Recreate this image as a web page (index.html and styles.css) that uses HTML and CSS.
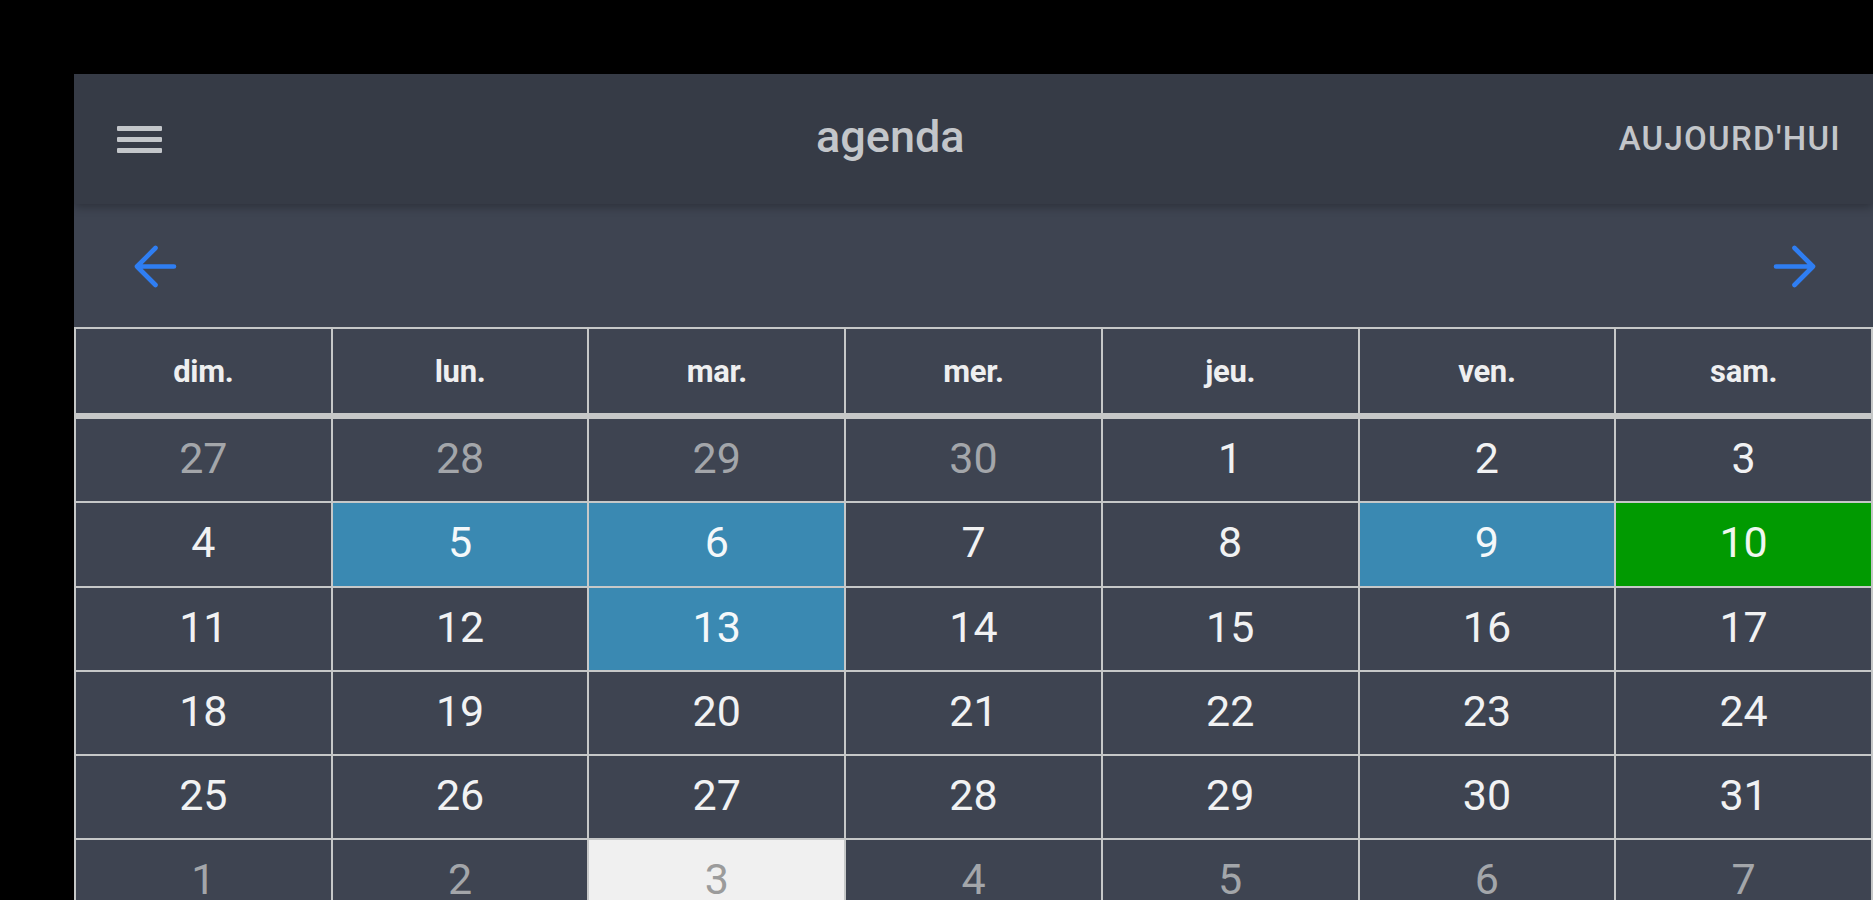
FILE: index.html
```html
<!DOCTYPE html>
<html lang="fr">
<head>
<meta charset="utf-8">
<title>agenda</title>
<link rel="stylesheet" href="styles.css">
</head>
<body>
<div class="panel">
  <header class="topbar">
    <button class="menu-btn" aria-label="menu">
      <svg width="45" height="27" viewBox="0 0 45 27"><rect x="0" y="0" width="45" height="5" rx="1"/><rect x="0" y="11" width="45" height="5" rx="1"/><rect x="0" y="22" width="45" height="5" rx="1"/></svg>
    </button>
    <div class="title">agenda</div>
    <button class="today-btn">AUJOURD'HUI</button>
  </header>
  <nav class="navbar">
    <button class="arrow-btn" aria-label="précédent">
      <svg width="37" height="37" viewBox="5 5 14 14"><path d="M19 12H5M12 19l-7-7 7-7"/></svg>
    </button>
    <button class="arrow-btn" aria-label="suivant">
      <svg width="37" height="37" viewBox="5 5 14 14"><path d="M5 12h14M12 5l7 7-7 7"/></svg>
    </button>
  </nav>
  <div class="calendar">
    <div class="dow">dim.</div><div class="dow">lun.</div><div class="dow">mar.</div><div class="dow">mer.</div><div class="dow">jeu.</div><div class="dow">ven.</div><div class="dow">sam.</div>

    <div class="day muted">27</div><div class="day muted">28</div><div class="day muted">29</div><div class="day muted">30</div><div class="day">1</div><div class="day">2</div><div class="day">3</div>

    <div class="day">4</div><div class="day event">5</div><div class="day event">6</div><div class="day">7</div><div class="day">8</div><div class="day event">9</div><div class="day today">10</div>

    <div class="day">11</div><div class="day">12</div><div class="day event">13</div><div class="day">14</div><div class="day">15</div><div class="day">16</div><div class="day">17</div>

    <div class="day">18</div><div class="day">19</div><div class="day">20</div><div class="day">21</div><div class="day">22</div><div class="day">23</div><div class="day">24</div>

    <div class="day">25</div><div class="day">26</div><div class="day">27</div><div class="day">28</div><div class="day">29</div><div class="day">30</div><div class="day">31</div>

    <div class="day muted">1</div><div class="day muted">2</div><div class="day muted selected">3</div><div class="day muted">4</div><div class="day muted">5</div><div class="day muted">6</div><div class="day muted">7</div>
  </div>
</div>
</body>
</html>
```
FILE: styles.css
```css
html, body {
  margin: 0;
  padding: 0;
  background: #000;
  height: 900px;
  overflow: hidden;
}

body {
  font-family: Roboto, "Liberation Sans", Arial, sans-serif;
}

button {
  background: none;
  border: 0;
  padding: 0;
  margin: 0;
  font: inherit;
  cursor: pointer;
}

.panel {
  margin: 74px 0 0 74px;
  background: #3d4350;
  min-height: 900px;
}

.topbar {
  position: relative;
  z-index: 1;
  box-sizing: border-box;
  height: 130px;
  background: #363b46;
  display: flex;
  align-items: center;
  padding: 0 32px 0 43px;
  box-shadow: 0 3px 9px rgba(0, 0, 0, 0.28);
}

.menu-btn {
  display: flex;
  width: 45px;
  height: 27px;
}

.menu-btn svg {
  fill: #c3c6ca;
}

.title {
  flex: 1;
  text-align: center;
  color: #c3c6ca;
  font-size: 45px;
  font-weight: 500;
  padding-bottom: 5px;
}

.today-btn {
  color: #c3c6ca;
  font-size: 33px;
  font-weight: 500;
  letter-spacing: 1.3px;
  padding-bottom: 2px;
}

.navbar {
  box-sizing: border-box;
  height: 123px;
  background: #3e4451;
  display: flex;
  align-items: center;
  justify-content: space-between;
  padding: 2px 60px 0 63px;
}

.arrow-btn {
  display: flex;
  width: 37px;
  height: 37px;
}

.arrow-btn svg {
  overflow: visible;
  fill: none;
  stroke: #2f7ef2;
  stroke-width: 1.75;
  stroke-linecap: round;
  stroke-linejoin: round;
}

.calendar {
  display: grid;
  grid-template-columns: repeat(7, 1fr);
  gap: 2px;
  padding: 2px;
  background: #c6c8c8;
}

.dow {
  height: 84px;
  margin-bottom: 4px;
  background: #3e4451;
  color: #eeeff0;
  font-weight: 700;
  font-size: 31px;
  display: flex;
  align-items: center;
  justify-content: center;
  letter-spacing: -0.3px;
}

.day {
  box-sizing: border-box;
  height: 82.25px;
  padding-bottom: 4px;
  background: #3e4451;
  color: #f1f2f3;
  font-size: 43px;
  display: flex;
  align-items: center;
  justify-content: center;
}

.day.muted {
  color: #a3a6aa;
}

.day.event {
  background: #3a89b2;
  color: #f4f8fa;
}

.day.today {
  background: #019a01;
  color: #f0f7f0;
}

.day.selected {
  background: #f0f0f0;
  color: #9b9b9b;
}
```
